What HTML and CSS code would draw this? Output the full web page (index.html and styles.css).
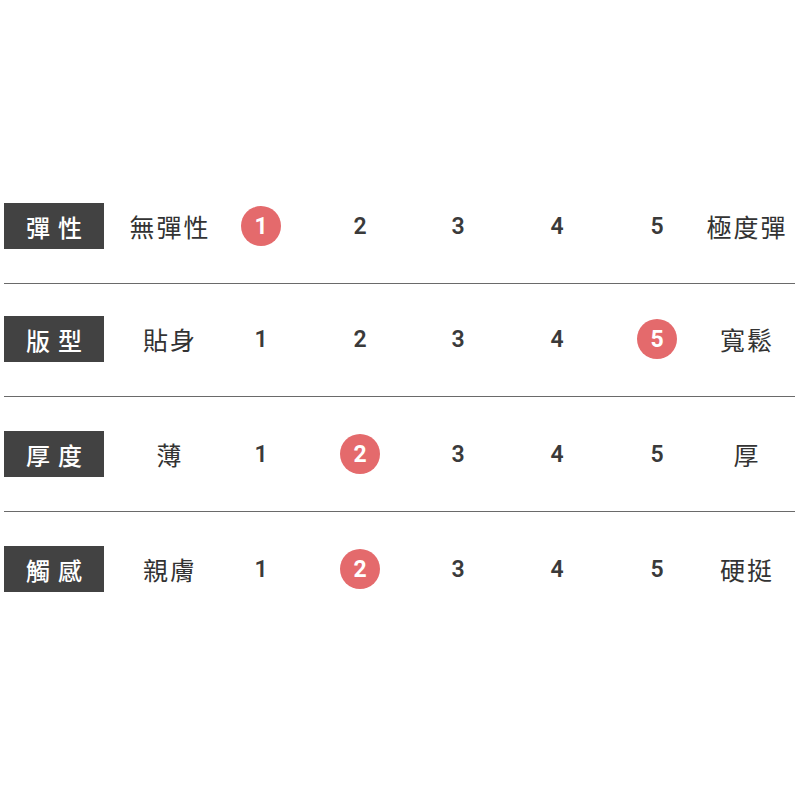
FILE: index.html
```html
<!DOCTYPE html>
<html lang="zh-Hant">
<head>
<meta charset="utf-8">
<link rel="stylesheet" href="styles.css">
</head>
<body>
<div class="table">
  <div class="row first">
    <div class="label">彈性</div>
    <div class="word">無彈性</div>
    <div class="num"><span class="dot">1</span></div>
    <div class="num">2</div>
    <div class="num">3</div>
    <div class="num">4</div>
    <div class="num">5</div>
    <div class="word">極度彈</div>
  </div>
  <div class="row">
    <div class="label">版型</div>
    <div class="word">貼身</div>
    <div class="num">1</div>
    <div class="num">2</div>
    <div class="num">3</div>
    <div class="num">4</div>
    <div class="num"><span class="dot">5</span></div>
    <div class="word">寬鬆</div>
  </div>
  <div class="row">
    <div class="label">厚度</div>
    <div class="word">薄</div>
    <div class="num">1</div>
    <div class="num"><span class="dot">2</span></div>
    <div class="num">3</div>
    <div class="num">4</div>
    <div class="num">5</div>
    <div class="word">厚</div>
  </div>
  <div class="row last">
    <div class="label">觸感</div>
    <div class="word">親膚</div>
    <div class="num">1</div>
    <div class="num"><span class="dot">2</span></div>
    <div class="num">3</div>
    <div class="num">4</div>
    <div class="num">5</div>
    <div class="word">硬挺</div>
  </div>
</div>
</body>
</html>
```
FILE: styles.css
```css
html, body {
  margin: 0;
  padding: 0;
  background: #ffffff;
}
body {
  font-family: "Noto Sans CJK TC", "Noto Sans", sans-serif;
  color: #333333;
}
.table {
  width: 791px;
  margin-left: 4px;
  padding-top: 203px;
}
.row {
  display: grid;
  grid-template-columns: 100px 132px 50px 148px 48px 150px 50px 130px;
  align-items: center;
  height: 46px;
  padding-bottom: 34px;
  border-bottom: 1px solid #6a6a6a;
  margin-bottom: 34px;
}
.row.first {
  margin-bottom: 32px;
}
.row.last {
  border-bottom: none;
  padding-bottom: 0;
  margin-bottom: 0;
}
.label {
  height: 46px;
  background: #424242;
  color: #ffffff;
  font-size: 24px;
  font-weight: 500;
  letter-spacing: 8px;
  padding-left: 8px;
  box-sizing: border-box;
  display: flex;
  align-items: center;
  justify-content: center;
}
.word {
  text-align: center;
  font-size: 25px;
  letter-spacing: 2px;
  color: #333333;
  white-space: nowrap;
}
.num {
  display: flex;
  justify-content: center;
  align-items: center;
  font-family: Roboto, "Liberation Sans", sans-serif;
  font-size: 23px;
  font-weight: 600;
  color: #3a3a3a;
}
.dot {
  width: 40px;
  height: 40px;
  border-radius: 50%;
  background: #e46a6c;
  color: #ffffff;
  font-weight: 700;
  display: flex;
  align-items: center;
  justify-content: center;
}
```
